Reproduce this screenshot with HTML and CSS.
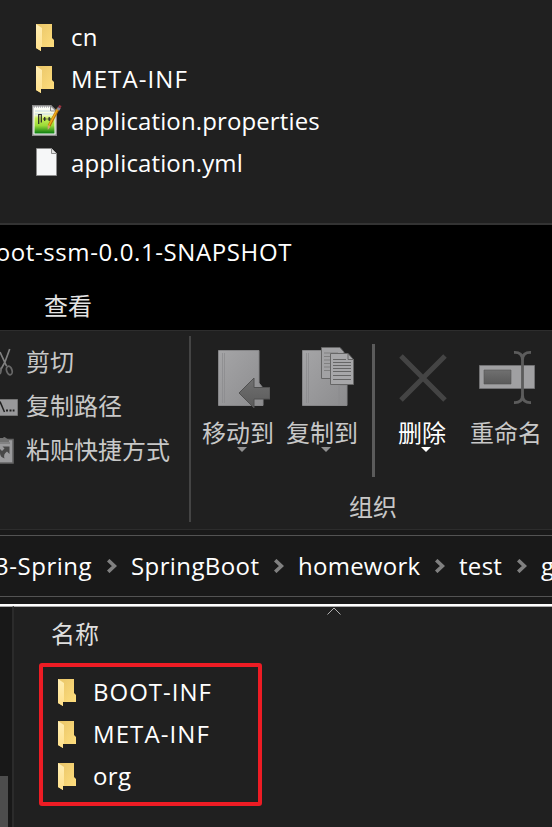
FILE: index.html
```html
<!DOCTYPE html>
<html lang="zh-CN">
<head>
<meta charset="utf-8">
<title>Explorer</title>
<link rel="stylesheet" href="styles.css">
</head>
<body>
<svg class="defs" width="0" height="0" aria-hidden="true">
  <defs>
    <linearGradient id="fold" x1="0" x2="1" y1="0" y2="1"><stop offset="0" stop-color="#e9c568"/><stop offset="1" stop-color="#ffdf7f"/></linearGradient>
    <linearGradient id="flap" x1="0" x2="0" y1="0" y2="1"><stop offset="0" stop-color="#ffeeb5"/><stop offset="1" stop-color="#ffe08a"/></linearGradient>
    <linearGradient id="green" x1="0" x2="0" y1="0" y2="1"><stop offset="0" stop-color="#fff"/><stop offset=".3" stop-color="#f4fad8"/><stop offset=".42" stop-color="#c8ee55"/><stop offset=".7" stop-color="#9bdc38"/><stop offset="1" stop-color="#087a10"/></linearGradient>
    <linearGradient id="grey" x1="0" x2="1" y1="0" y2="1"><stop offset="0" stop-color="#a5a5a7"/><stop offset="1" stop-color="#8c8c8e"/></linearGradient>
    <linearGradient id="dark" x1="0" x2="0" y1="0" y2="1"><stop offset="0" stop-color="#707070"/><stop offset="1" stop-color="#5a5a5a"/></linearGradient>
    <symbol id="folder" viewBox="0 0 18 28"><path d="M0 0H16V14L18 16V23H5V27L0 24Z" fill="url(#fold)"/><path d="M0 0L6 4V22.5L5 23V27L0 24Z" fill="url(#flap)"/></symbol>
    <symbol id="chev" viewBox="0 0 10 14"><path d="M1.2 1.2L7.4 7L1.2 12.8" fill="none" stroke="#808080" stroke-width="3.6"/></symbol>
  </defs>
</svg>

<section class="files">
  <div class="row"><svg class="folder"><use href="#folder"/></svg><span class="t-cn">cn</span></div>
  <div class="row"><svg class="folder"><use href="#folder"/></svg><span class="t-meta">META-INF</span></div>
  <div class="row"><svg class="npp" viewBox="0 0 30 33">
      <path d="M.7 1.7H19L24.3 7V31.3H.7Z" fill="#fff" stroke="#8b8b8b" stroke-width="1.4"/>
      <path d="M2.5 3H18L22.5 7.5V29.5H2.5Z" fill="url(#green)"/>
      <path d="M2 3H18" stroke="#888" stroke-dasharray="1 1"/>
      <path d="M3 7H18M3 10H22" stroke="#c4d9e4"/>
      <path d="M18.5 2V7H24Z" fill="#eee" stroke="#8b8b8b"/>
      <path d="M6.7 20V10.5H9.3V18.5M11 15H14.500M12.700 13V17M15.500 15H19M17.200 13V17" fill="none" stroke="#282828" stroke-width="1.2"/>
      <path d="M17 22L26 5" stroke="#b77009" stroke-width="3"/><path d="M16.7 22L25.7 5" stroke="#efae1c" stroke-width="1.5"/>
      <path d="M26 6L27.3 3.5" stroke="#889" stroke-width="3"/><path d="M27.2 3.8L28.4 1.5" stroke="#9b3340" stroke-width="2.6"/>
      <path d="M15.6 21L18.4 22.8L15.8 26Z" fill="#d8a078"/>
    </svg><span class="t-prop">application.properties</span></div>
  <div class="row"><svg class="doc" viewBox="0 0 21 28"><path d="M.5 .5H15.5L20.5 5.5V27.5H.5Z" fill="#f6f7f8" stroke="#8d8d8d"/><path d="M15.5 .5V5.5H20.5" fill="#e4e4e4" stroke="#8d8d8d"/></svg><span class="t-prop">application.yml</span></div>
</section>

<section class="head">
  <div class="title"><span>oot-ssm-0.0.1-SNAPSHOT</span></div>
  <div class="tab">查看</div>
</section>

<section class="ribbon">
  <div class="clip">
    <div class="cmd"><svg viewBox="0 0 20 30"><path d="M9.7 1L5 14L0 23M0 4L6.5 18" fill="none" stroke="#808080" stroke-width="1.7"/><ellipse cx="9.3" cy="22.5" rx="2.7" ry="4.4" transform="rotate(-18 9.3 22.5)" fill="none" stroke="#686868" stroke-width="1.8"/><path d="M0 20Q2 22 0 26" fill="none" stroke="#686868" stroke-width="1.8"/></svg><span>剪切</span></div>
    <div class="cmd"><svg viewBox="0 0 20 30"><path d="M-2 7.5H17.5V23.5H-2Z" fill="#98989a" stroke="#757575"/><path d="M0 9.5L4.5 20" stroke="#202020" stroke-width="1.5"/><path d="M6 18.5H8M9.5 18.5H11.5M12.7 18.5H14.5" stroke="#202020" stroke-width="2"/></svg><span>复制路径</span></div>
    <div class="cmd"><svg viewBox="0 0 20 30"><path d="M-2 3.5H13V27H-2Z" fill="#9a9a9c" stroke="#646464" stroke-width="1.6"/><path d="M0 2H3Q4 0 6 2L9 4V6H0Z" fill="#707070"/><path d="M0 7H10" stroke="#6a6a6a"/><path d="M0 13L2 15L4.500 12.500L2.500 10.500H9.500V18L7 15.500Q3 18 4.500 22.500Q0 21 0 17Z" fill="#484848"/></svg><span>粘贴快捷方式</span></div>
  </div>
  <i class="sep"></i>
  <div class="organize">
    <div class="tools">
      <div class="tool move"><svg class="ico" viewBox="0 0 56 64">
        <path d="M4.5 4.5H45V37L49 42V59.5H4.5Z" fill="url(#grey)" stroke="#858587"/><path d="M8.500 7V57M10.500 7V57" stroke="#8c8c8e" stroke-width=".8"/><path d="M25 47L40 32V41.500H56V53H40V62Z" fill="url(#dark)" stroke="#505050"/></svg><span>移动到</span><i class="arr"></i></div>
      <div class="tool copy"><svg class="ico" viewBox="0 0 56 64">
        <path d="M4.5 4.500H42V39H49V59.5H4.5Z" fill="url(#grey)" stroke="#858587"/><path d="M8.500 7V57M10.500 7V57M41 39V59" stroke="#8c8c8e" stroke-width=".8"/>
        <path d="M23.5 1.5H42L46 6V32.500H23.5Z" fill="#a2a2a4" stroke="#666"/><path d="M26 7H40M26 10.500H32M26 14H32M26 17.500H32M26 21H32M26 24.500H32" stroke="#808080"/>
        <path d="M32.500 7.500H50L55.500 13.500V38.500H32.500Z" fill="#a7a7a9" stroke="#666"/><path d="M50 7.500V13.500H56M35 13.500H48M35 16.500H53M35 19.500H53M35 22.500H53M35 25.500H53M35 29.500H53M35 33.500H53" fill="none" stroke="#666"/></svg><span>复制到</span><i class="arr"></i></div>
      <i class="sep2"></i>
      <div class="tool del"><svg class="ico" viewBox="0 0 56 64"><path d="M6 10L50 54M50 10L6 54" stroke="#444" stroke-width="5"/></svg><span>删除</span><i class="arr"></i></div>
      <div class="tool ren"><svg class="ico" viewBox="0 0 56 64"><path d="M.5 19.500H55.500V42.500H.5Z" fill="#a0a0a2" stroke="#717173"/><path d="M5 24H32V38H5Z" fill="url(#dark)" stroke="#555" stroke-width=".6"/><path d="M35 6.500Q43.500 6 43.500 14Q43.500 6 52 6.500M43.500 12V51M35 56.500Q43.500 57 43.500 49Q43.500 57 52 56.500" fill="none" stroke="#5c5c5c" stroke-width="2.8"/></svg><span>重命名</span></div>
    </div>
    <div class="group">组织</div>
  </div>
</section>

<nav class="address">
  <div class="crumbs">
    <span class="c0">3-Spring</span><svg class="chev"><use href="#chev"/></svg>
    <span class="c1">SpringBoot</span><svg class="chev"><use href="#chev"/></svg>
    <span class="c2">homework</span><svg class="chev"><use href="#chev"/></svg>
    <span class="c3">test</span><svg class="chev"><use href="#chev"/></svg>
    <span class="c4">g</span>
  </div>
</nav>

<section class="body">
  <aside><i class="thumb"></i></aside>
  <main>
    <div class="colhead"><span>名称</span><svg class="sort" viewBox="0 0 14 8"><path d="M.5 7.500L7 1L13.500 7.500" fill="none" stroke="#b0b0b0"/></svg></div>
    <div class="marked">
      <div class="row"><svg class="folder"><use href="#folder"/></svg><span class="t-boot">BOOT-INF</span></div>
      <div class="row"><svg class="folder"><use href="#folder"/></svg><span class="t-meta">META-INF</span></div>
      <div class="row"><svg class="folder"><use href="#folder"/></svg><span class="t-org">org</span></div>
    </div>
  </main>
</section>
</body>
</html>
```
FILE: styles.css
```css
* { box-sizing: border-box; }
body { margin: 0; width: 552px; height: 827px; overflow: hidden; background: #202020; color: #fff;
  font: 24px/42px "Open Sans", "Noto Sans CJK SC", sans-serif; white-space: nowrap; }
svg { display: block; flex: none; }
.defs { position: absolute; }
.files { height: 223px; padding-top: 16px; }
.row { height: 42px; display: flex; align-items: center; }
.files .row { display: grid; grid-template-columns: 32px 1fr; padding-left: 32px; column-gap: 7px; }
.folder { width: 18px; height: 28px; }
.files .folder { margin: 1px 0 0 4px; }
.npp { width: 30px; height: 33px; margin-top: -2px; }
.doc { width: 21px; height: 28px; margin: -2px 0 0 4px; }
.t-cn { letter-spacing: .3px; }
.t-meta { letter-spacing: 1.1px; }
.t-boot { letter-spacing: 1px; }
.t-prop { letter-spacing: .12px; }
.t-org { letter-spacing: .4px; }

.head { height: 107px; border-top: 2px solid #333; background: #000; }
.title { width: 292px; height: 54px; line-height: 54px; display: flex; justify-content: flex-end; overflow: hidden; letter-spacing: .6px; }
.tab { height: 51px; line-height: 54px; padding-left: 44px; color: #e4e4e4; }

.ribbon { height: 200px; display: flex; border-top: 1px solid #2d2d2d; border-bottom: 1px solid #2d2d2d; color: #c8c8c8; }
.clip { width: 189px; flex: none; padding-top: 10px; }
.cmd { height: 44px; display: flex; align-items: center; gap: 6px; }
.cmd span { height: 44px; line-height: 42px; }
.cmd svg { width: 20px; height: 30px; }
.sep { width: 2px; height: 186px; margin-top: 5px; background: #444; flex: none; }
.organize { flex: 1; min-width: 0; }
.tools { height: 154px; display: flex; }
.tool { display: flex; flex-direction: column; align-items: center; padding-top: 15px; height: 130px; flex: none; }
.ico { width: 56px; height: 64px; }
.tool span { height: 36px; line-height: 45px; }
.move, .copy { width: 84px; }
.move { margin-left: 9px; }
.move span, .copy span { margin-left: -8px; }
.arr { width: 10px; height: 5px; background: #909090; clip-path: polygon(0 0, 100% 0, 50% 100%); margin-top: 1px; }
.sep2 { width: 3px; height: 133px; margin: 13px 0 0 4px; background: #5b5b5b; flex: none; }
.del { width: 94px; color: #fff; }
.del .ico { margin-left: 2px; }
.del .arr { background: #fff; margin-left: 8px; }
.ren { width: 74px; }
.ren .ico { margin-left: 2px; }
.group { height: 44px; line-height: 44px; width: 364px; text-align: center; }

.address { height: 74px; padding-top: 5px; background: #191919; }
.crumbs { height: 62px; border: solid #535353; border-width: 1px 0; line-height: 60px;
  display: grid; grid-template-columns: 92px 39px 128px 39px 122px 39px 43px 39px 11px; align-items: center; }
.crumbs span { height: 60px; }
.c0 { display: flex; justify-content: flex-end; overflow: hidden; letter-spacing: .5px; }
.c1 { letter-spacing: .4px; }
.c2 { letter-spacing: .25px; }
.c3 { letter-spacing: .3px; }
.chev { width: 10px; height: 14px; margin-left: 15px; }

.body { height: 223px; display: flex; border-top: 2px solid #fff; }
aside { width: 14px; background: #181818; border-right: 2px solid #2b2b2b; border-top: 1px solid #aaa; display: flex; align-items: flex-end; }
.thumb { width: 8px; height: 51px; background: #4d4d4d; }
main { flex: 1; border-top: 1px solid #aaa; padding-left: 25px; }
.colhead { height: 56px; line-height: 53px; padding-left: 12px; display: flex; color: #dedede; }
.sort { width: 14px; height: 8px; margin: 0 0 0 228px; }
.marked { width: 223px; height: 143px; border: 4px solid #ed1c24; border-radius: 3px; padding: 4px 0 0 15px; }
.marked .row { gap: 17px; }
.marked .folder { margin-top: 1px; }
```
